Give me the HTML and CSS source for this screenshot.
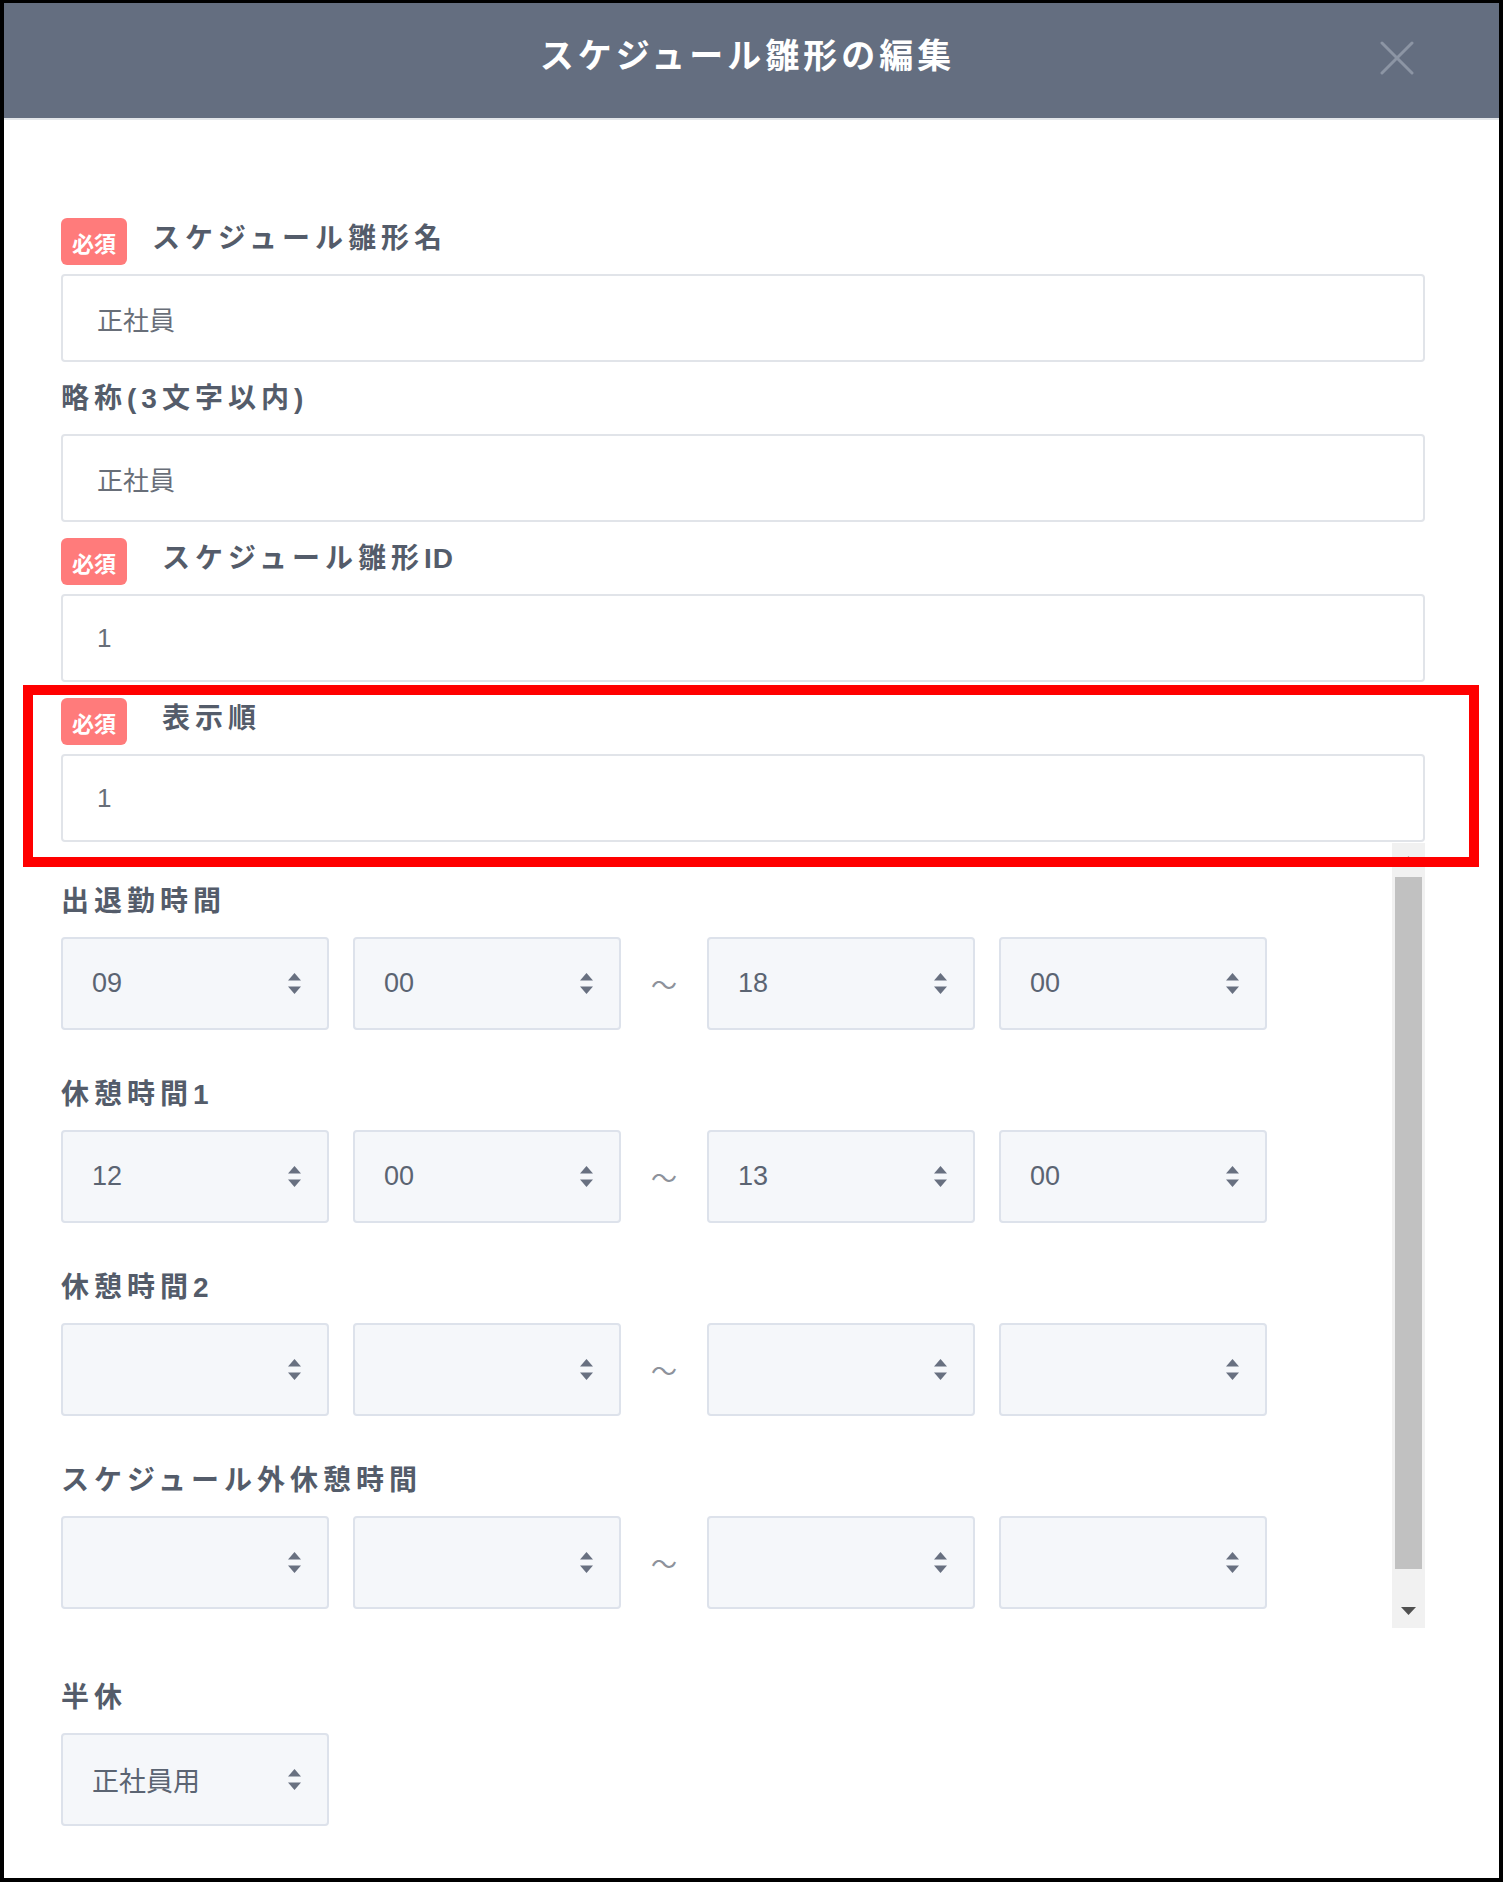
FILE: index.html
```html
<!DOCTYPE html>
<html lang="ja">
<head>
<meta charset="utf-8">
<title>スケジュール雛形の編集</title>
<link rel="stylesheet" href="styles.css">
</head>
<body>
<div class="page">
  <header class="modal-head">
    <div class="head-side"></div>
    <h1 class="title">スケジュール雛形の編集</h1>
    <div class="head-side head-right">
      <svg class="close" width="34" height="34" viewBox="0 0 34 34" aria-label="閉じる">
        <line x1="2" y1="2" x2="32" y2="32"/>
        <line x1="32" y1="2" x2="2" y2="32"/>
      </svg>
    </div>
  </header>

  <main class="modal-body">
    <div class="field">
      <div class="label-row"><span class="badge">必須</span><span class="label label-tight">スケジュール雛形名</span></div>
      <div class="input">正社員</div>
    </div>
    <div class="field">
      <div class="label-row"><span class="label">略称(3文字以内)</span></div>
      <div class="input">正社員</div>
    </div>
    <div class="field">
      <div class="label-row"><span class="badge">必須</span><span class="label label-wide">スケジュール雛形<span class="latin">ID</span></span></div>
      <div class="input">1</div>
    </div>
    <div class="field">
      <div class="label-row"><span class="badge">必須</span><span class="label label-wide">表示順</span></div>
      <div class="input">1</div>
    </div>

    <div class="scroller">
      <div class="scroll-content">
        <div class="time-block">
          <div class="tlabel">出退勤時間</div>
          <div class="time-row">
            <div class="sel"><span class="sel-val">09</span><svg class="updown" width="13" height="21" viewBox="0 0 13 21"><polygon points="6.5,0 13,7.5 0,7.5"/><polygon points="0,13.5 13,13.5 6.5,21"/></svg></div>
            <div class="sel"><span class="sel-val">00</span><svg class="updown" width="13" height="21" viewBox="0 0 13 21"><polygon points="6.5,0 13,7.5 0,7.5"/><polygon points="0,13.5 13,13.5 6.5,21"/></svg></div>
            <div class="tilde">～</div>
            <div class="sel"><span class="sel-val">18</span><svg class="updown" width="13" height="21" viewBox="0 0 13 21"><polygon points="6.5,0 13,7.5 0,7.5"/><polygon points="0,13.5 13,13.5 6.5,21"/></svg></div>
            <div class="sel"><span class="sel-val">00</span><svg class="updown" width="13" height="21" viewBox="0 0 13 21"><polygon points="6.5,0 13,7.5 0,7.5"/><polygon points="0,13.5 13,13.5 6.5,21"/></svg></div>
          </div>
        </div>
        <div class="time-block">
          <div class="tlabel">休憩時間1</div>
          <div class="time-row">
            <div class="sel"><span class="sel-val">12</span><svg class="updown" width="13" height="21" viewBox="0 0 13 21"><polygon points="6.5,0 13,7.5 0,7.5"/><polygon points="0,13.5 13,13.5 6.5,21"/></svg></div>
            <div class="sel"><span class="sel-val">00</span><svg class="updown" width="13" height="21" viewBox="0 0 13 21"><polygon points="6.5,0 13,7.5 0,7.5"/><polygon points="0,13.5 13,13.5 6.5,21"/></svg></div>
            <div class="tilde">～</div>
            <div class="sel"><span class="sel-val">13</span><svg class="updown" width="13" height="21" viewBox="0 0 13 21"><polygon points="6.5,0 13,7.5 0,7.5"/><polygon points="0,13.5 13,13.5 6.5,21"/></svg></div>
            <div class="sel"><span class="sel-val">00</span><svg class="updown" width="13" height="21" viewBox="0 0 13 21"><polygon points="6.5,0 13,7.5 0,7.5"/><polygon points="0,13.5 13,13.5 6.5,21"/></svg></div>
          </div>
        </div>
        <div class="time-block">
          <div class="tlabel">休憩時間2</div>
          <div class="time-row">
            <div class="sel"><span class="sel-val"></span><svg class="updown" width="13" height="21" viewBox="0 0 13 21"><polygon points="6.5,0 13,7.5 0,7.5"/><polygon points="0,13.5 13,13.5 6.5,21"/></svg></div>
            <div class="sel"><span class="sel-val"></span><svg class="updown" width="13" height="21" viewBox="0 0 13 21"><polygon points="6.5,0 13,7.5 0,7.5"/><polygon points="0,13.5 13,13.5 6.5,21"/></svg></div>
            <div class="tilde">～</div>
            <div class="sel"><span class="sel-val"></span><svg class="updown" width="13" height="21" viewBox="0 0 13 21"><polygon points="6.5,0 13,7.5 0,7.5"/><polygon points="0,13.5 13,13.5 6.5,21"/></svg></div>
            <div class="sel"><span class="sel-val"></span><svg class="updown" width="13" height="21" viewBox="0 0 13 21"><polygon points="6.5,0 13,7.5 0,7.5"/><polygon points="0,13.5 13,13.5 6.5,21"/></svg></div>
          </div>
        </div>
        <div class="time-block">
          <div class="tlabel">スケジュール外休憩時間</div>
          <div class="time-row">
            <div class="sel"><span class="sel-val"></span><svg class="updown" width="13" height="21" viewBox="0 0 13 21"><polygon points="6.5,0 13,7.5 0,7.5"/><polygon points="0,13.5 13,13.5 6.5,21"/></svg></div>
            <div class="sel"><span class="sel-val"></span><svg class="updown" width="13" height="21" viewBox="0 0 13 21"><polygon points="6.5,0 13,7.5 0,7.5"/><polygon points="0,13.5 13,13.5 6.5,21"/></svg></div>
            <div class="tilde">～</div>
            <div class="sel"><span class="sel-val"></span><svg class="updown" width="13" height="21" viewBox="0 0 13 21"><polygon points="6.5,0 13,7.5 0,7.5"/><polygon points="0,13.5 13,13.5 6.5,21"/></svg></div>
            <div class="sel"><span class="sel-val"></span><svg class="updown" width="13" height="21" viewBox="0 0 13 21"><polygon points="6.5,0 13,7.5 0,7.5"/><polygon points="0,13.5 13,13.5 6.5,21"/></svg></div>
          </div>
        </div>
      </div>
      <div class="scrollbar">
        <div class="sb-btn"><svg width="15" height="8" viewBox="0 0 15 8"><polygon class="sb-up" points="7.5,0 15,8 0,8"/></svg></div>
        <div class="sb-thumb"></div>
        <div class="sb-space"></div>
        <div class="sb-btn"><svg width="15" height="8" viewBox="0 0 15 8"><polygon class="sb-down" points="0,0 15,0 7.5,8"/></svg></div>
      </div>
    </div>

    <div class="time-block half">
      <div class="tlabel">半休</div>
      <div class="time-row">
        <div class="sel"><span class="sel-val">正社員用</span><svg class="updown" width="13" height="21" viewBox="0 0 13 21"><polygon points="6.5,0 13,7.5 0,7.5"/><polygon points="0,13.5 13,13.5 6.5,21"/></svg></div>
      </div>
    </div>
  </main>

  <div class="highlight"></div>
</div>
</body>
</html>
```

FILE: styles.css
```css
* {
  box-sizing: border-box;
}

html, body {
  margin: 0;
  padding: 0;
  background: #ffffff;
}

body {
  font-family: "Liberation Sans", "Noto Sans CJK JP", sans-serif;
}

.page {
  position: relative;
  width: 1503px;
  height: 1882px;
  border: 4px solid #000000;
  border-top-width: 3px;
  background: #ffffff;
  overflow: hidden;
}

/* header */
.modal-head {
  display: grid;
  grid-template-columns: 1fr auto 1fr;
  align-items: center;
  height: 117px;
  background: #646e80;
  border-bottom: 2px solid #e3e6ea;
}

.title {
  margin: 0;
  padding-right: 8px;
  font-family: "Noto Sans CJK JP", sans-serif;
  font-weight: 700;
  font-size: 34px;
  letter-spacing: 4px;
  color: #ffffff;
  line-height: 40px;
  padding-bottom: 14px;
}

.head-right {
  display: flex;
  justify-content: flex-end;
  padding-right: 85px;
  padding-bottom: 5px;
}

.close line {
  stroke: #8c95a4;
  stroke-width: 3;
  stroke-linecap: round;
}

/* body */
.modal-body {
  padding: 82px 74px 0 57px;
}

.field {
  margin-top: 16px;
}

.label-row {
  display: flex;
  align-items: center;
  height: 47px;
}

.badge {
  display: inline-flex;
  align-items: center;
  justify-content: center;
  width: 66px;
  height: 47px;
  border-radius: 6px;
  background: #ff7b7b;
  color: #ffffff;
  font-family: "Noto Sans CJK JP", sans-serif;
  font-weight: 700;
  font-size: 22px;
  margin-right: 35px;
}

.label-row .label-tight {
  margin-left: -10px;
}

.label,
.tlabel {
  font-family: "Liberation Sans", "Noto Sans CJK JP", sans-serif;
  font-weight: 700;
  font-size: 28px;
  letter-spacing: 5px;
  color: #545c6a;
}

.label .latin {
  letter-spacing: 1px;
}

.label {
  line-height: 34px;
  padding-bottom: 6px;
}

.input {
  display: flex;
  align-items: center;
  height: 88px;
  margin-top: 9px;
  padding-left: 34px;
  border: 2px solid #e1e4e9;
  border-radius: 4px;
  background: #ffffff;
  font-family: "Liberation Sans", "Noto Sans CJK JP", sans-serif;
  font-size: 26px;
  color: #686e78;
}

/* scroll area */
.scroller {
  display: flex;
  height: 785px;
  margin-top: 1px;
  overflow: hidden;
}

.scroll-content {
  flex: 1;
  padding-top: 44px;
}

.time-block {
  margin-bottom: 50px;
}

.tlabel {
  height: 30px;
  line-height: 30px;
}

.time-row {
  display: flex;
  align-items: center;
  margin-top: 20px;
}

.sel {
  display: flex;
  align-items: center;
  justify-content: space-between;
  width: 268px;
  height: 93px;
  padding: 0 26px 0 29px;
  border: 2px solid #dde2eb;
  border-radius: 4px;
  background: #f5f7fa;
  font-family: "Liberation Sans", "Noto Sans CJK JP", sans-serif;
  font-size: 27px;
  color: #5b6472;
}

.sel + .sel {
  margin-left: 24px;
}

.updown polygon {
  fill: #687080;
}

.tilde {
  width: 86px;
  text-align: center;
  font-family: "Noto Sans CJK JP", sans-serif;
  font-size: 26px;
  color: #8d929b;
}

.scrollbar {
  display: flex;
  flex-direction: column;
  width: 33px;
  background: #f1f1f1;
}

.sb-btn {
  display: flex;
  align-items: center;
  justify-content: center;
  height: 34px;
  flex: none;
}

.sb-up {
  fill: #a3a3a3;
}

.sb-down {
  fill: #505050;
}

.sb-thumb {
  height: 692px;
  margin: 0 3px;
  background: #c1c1c1;
  flex: none;
}

.sb-space {
  flex: 1;
}

.half {
  margin-top: 55px;
}

/* annotation overlay */
.highlight {
  position: absolute;
  left: 19px;
  top: 682px;
  width: 1456px;
  height: 182px;
  border: 10px solid #ff0000;
  pointer-events: none;
}
```
